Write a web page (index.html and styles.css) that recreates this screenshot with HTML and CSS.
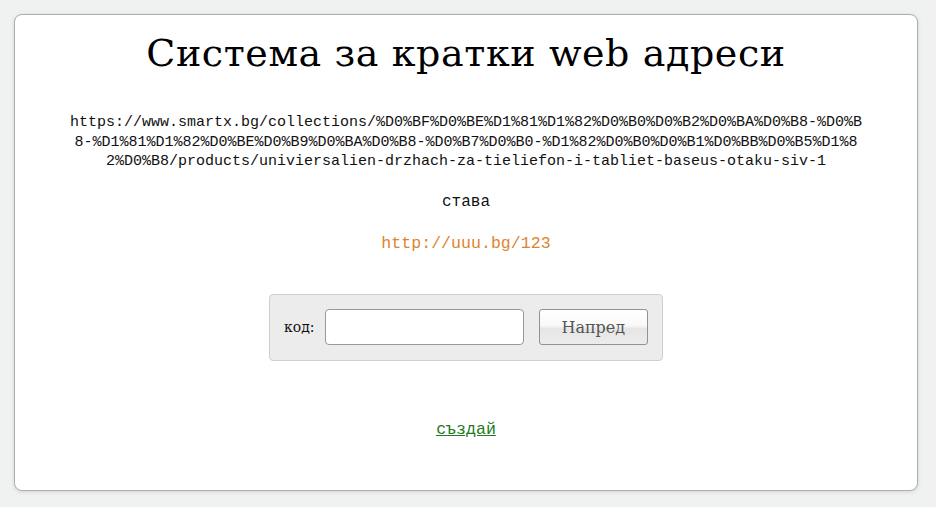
FILE: index.html
```html
<!DOCTYPE html>
<html lang="bg">
<head>
<meta charset="utf-8">
<title>Система за кратки web адреси</title>
<link rel="stylesheet" href="styles.css">
</head>
<body>
<div class="card">
  <h1 class="title">Система за кратки web адреси</h1>
  <div class="long-url">https://www.smartx.bg/collections/%D0%BF%D0%BE%D1%81%D1%82%D0%B0%D0%B2%D0%BA%D0%B8-%D0%B8-%D1%81%D1%82%D0%BE%D0%B9%D0%BA%D0%B8-%D0%B7%D0%B0-%D1%82%D0%B0%D0%B1%D0%BB%D0%B5%D1%82%D0%B8/products/univiersalien-drzhach-za-tieliefon-i-tabliet-baseus-otaku-siv-1</div>
  <div class="becomes">става</div>
  <div class="short-url">http://uuu.bg/123</div>
  <form class="code-form">
    <label class="code-label" for="code">код:</label>
    <input class="code-input" id="code" type="text">
    <button class="code-btn" type="button">Напред</button>
  </form>
  <a class="create-link" href="#">създай</a>
</div>
</body>
</html>
```
FILE: styles.css
```css
html, body {
  margin: 0;
  padding: 0;
}
body {
  background: #f0f2f1;
  padding: 14px 18px 16px 14px;
  font-family: "Liberation Mono", monospace;
  color: #111;
}
.card {
  background: #fff;
  border: 1px solid #a9aeae;
  border-radius: 8px;
  box-shadow: 0 1px 4px rgba(0,0,0,0.12);
  height: 477px;
  box-sizing: border-box;
  padding: 0 53px;
  display: flex;
  flex-direction: column;
  align-items: center;
}
.title {
  margin: 14px 0 0;
  font-family: "DejaVu Serif", serif;
  font-weight: normal;
  font-size: 38px;
  letter-spacing: 0.6px;
  line-height: 48px;
  color: #000;
}
.long-url {
  margin-top: 36px;
  width: 796px;
  text-align: center;
  word-break: break-all;
  font-size: 15px;
  line-height: 19.5px;
  color: #111;
}
.becomes {
  margin-top: 19px;
  font-size: 16px;
  line-height: 22px;
}
.short-url {
  margin-top: 20px;
  font-size: 16.6px;
  line-height: 22px;
  color: #dc8530;
}
.code-form {
  margin: 39px 0 0;
  width: 394px;
  height: 67px;
  box-sizing: border-box;
  background: #ececec;
  border: 1px solid #cfcfcf;
  border-radius: 4px;
  display: flex;
  align-items: center;
  padding: 0 14px;
}
.code-label {
  font-family: "DejaVu Serif", serif;
  font-size: 14px;
  color: #111;
  margin-right: 10px;
}
.code-input {
  width: 200px;
  height: 36px;
  box-sizing: border-box;
  border: 1px solid #999;
  border-radius: 4px;
  background: #fff;
  margin: 0 15px 0 0;
  padding: 0 6px;
}
.code-btn {
  width: 110px;
  height: 36px;
  box-sizing: border-box;
  border: 1px solid #8e9494;
  border-radius: 3px;
  background: linear-gradient(#fff 0%, #f9f9f9 45%, #e6e6e6 55%, #ececec 100%);
  font-family: "DejaVu Serif", serif;
  font-size: 16px;
  color: #555;
  padding: 0;
}
.create-link {
  margin-top: 58px;
  font-size: 16.6px;
  line-height: 22px;
  color: #237a23;
}
```
